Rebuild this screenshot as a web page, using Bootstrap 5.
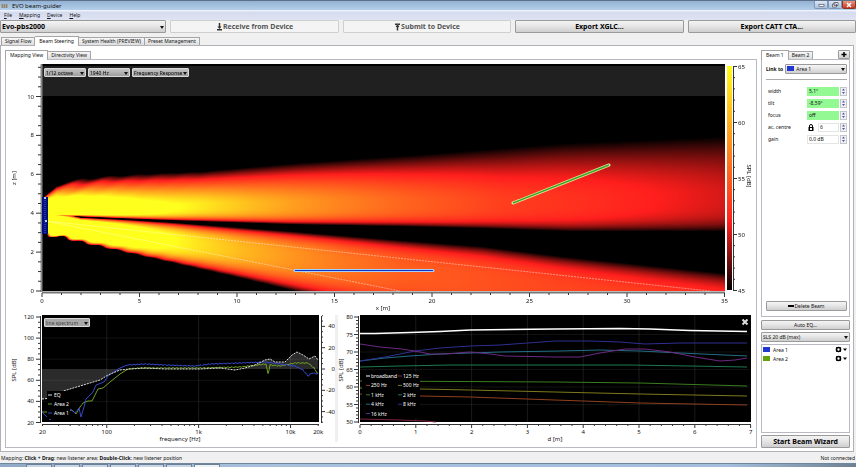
<!DOCTYPE html>
<html lang="en">
  <head>
    <meta charset="utf-8" />
    <title>EVO beam-guider</title>
    <link
      rel="stylesheet"
      href="https://cdn.jsdelivr.net/npm/bootstrap@5.3.3/dist/css/bootstrap.min.css"
    />
    <style>
      body {
        font-family: "Noto Sans", "Open Sans", sans-serif;
        font-size: 5px;
        line-height: 8px;
        color: #111;
        background: #f0f0f0;
      }
      button,
      select,
      input {
        font-size: inherit;
        line-height: inherit;
        color: inherit;
      }
      svg {
        display: block;
      }
      .title-bar {
        height: 10px;
        border-top: 1px solid #5f7188;
        background: linear-gradient(#93b1d3, #b3cfea);
        font-size: 6px;
        padding-left: 1px;
      }
      .win-btn {
        width: 14px;
        height: 8px;
        padding: 0;
        border: 1px solid #7f97b5;
        border-top: 0;
        border-radius: 0 0 2px 2px;
        background: linear-gradient(#dbe7f5, #a9c0dc);
      }
      .win-close {
        border-color: #8a3324;
        background: linear-gradient(#e39a86, #c8371c);
      }
      .menu-bar {
        height: 10px;
        background: linear-gradient(#eef1fb 1px, #d4dbee 2px, #dfe4f3);
        gap: 7px;
        padding-left: 4px;
      }
      .menu-bar a {
        color: #111;
        text-decoration: none;
      }
      .tool-row {
        gap: 4px;
      }
      .tool-row > * {
        flex: 1 1 0;
      }
      .ui-btn,
      .ui-pick select {
        border: 1px solid #9a9a9a;
        border-radius: 1px;
        background: linear-gradient(#f4f4f4, #e6e6e6 45%, #cfcfcf);
        padding: 0;
        text-align: center;
      }
      .ui-btn {
        height: 10px;
      }
      .big-text {
        font-size: 7px;
        font-weight: 700;
        height: 13px;
        color: #000;
      }
      .big-text select {
        font-weight: 700;
      }
      .ui-btn:disabled {
        background: #f4f4f4;
        border-color: #cfcfcf;
        color: #555;
      }
      .add-btn {
        height: 9px;
      }
      .ui-pick {
        position: relative;
        display: block;
      }
      .ui-pick select {
        appearance: none;
        display: block;
        width: 100%;
        height: 100%;
        padding-left: 1px;
        text-align: left;
      }
      .ui-pick::after {
        content: "";
        position: absolute;
        right: 2px;
        top: 50%;
        margin-top: -1px;
        border: 2px solid transparent;
        border-top: 3px solid #111;
        border-bottom: 0;
        pointer-events: none;
      }
      .tab-strip {
        position: relative;
        z-index: 1;
      }
      .main-tabs {
        padding: 3px 0 0 1px;
      }
      .tab-strip button {
        height: 8px;
        line-height: 7px;
        border: 1px solid #a5a5a8;
        border-left-width: 0;
        border-bottom: 0;
        background: linear-gradient(#f6f6f6, #dedede);
        padding: 0 3px;
      }
      .tab-strip button:first-child {
        border-left-width: 1px;
      }
      .tab-strip button.picked {
        height: 10px;
        margin-bottom: -1px;
        background: #fff;
        padding: 0 4px;
      }
      .page-box {
        border: 1px solid #b0b0b6;
        background: #fff;
        margin-right: 2px;
        padding: 4px 3px 3px 4px;
        gap: 4px;
      }
      .pane {
        border: 1px solid #b9b9c2;
        background: #fff;
      }
      .side-col {
        width: 89px;
        flex: none;
      }
      .plot-tools {
        position: absolute;
        gap: 2px;
        top: 8px;
        left: 38px;
      }
      .spectrum-tools {
        top: 5px;
      }
      .plot-tools .ui-pick {
        height: 9px;
      }
      .plot-tools select {
        background: linear-gradient(#c4c4c4, #9d9d9d);
        border-color: #d8d8d8;
        line-height: 6px;
        color: #000;
      }
      .spectrum-tools select {
        background: #a8a8a8;
        color: #444;
      }
      .w-short {
        width: 42px;
      }
      .w-mid {
        width: 46px;
      }
      .w-long {
        width: 57px;
      }
      .lower-a {
        flex: 329 1 0;
      }
      .lower-b {
        flex: 421 1 0;
      }
      svg text {
        font-size: 6px;
        fill: #111;
      }
      svg .key-text text {
        font-size: 5px;
        fill: #fff;
      }
      .tint {
        width: 7px;
        height: 5px;
        flex: none;
      }
      .tint-a {
        background: #2138d0;
      }
      .tint-b {
        background: #62a00c;
      }
      .link-pick {
        height: 10px;
      }
      .link-pick select {
        padding-left: 10px;
      }
      .link-pick .tint {
        position: absolute;
        left: 2px;
        top: 2px;
      }
      .link-row {
        padding: 4px 2px 0 4px;
        gap: 2px;
      }
      .side-rule {
        border-top: 1px solid #aaa;
        margin: 5px 2px 0 4px;
      }
      .props {
        padding: 6px 2px 0 6px;
        gap: 2px;
      }
      .props label {
        flex: 1;
      }
      .prop-row {
        height: 10px;
      }
      .prop-row input {
        width: 32px;
        height: 9px;
        border: 1px solid #e4e4e4;
        padding: 0 1px;
        background: #fff;
      }
      .prop-row input.set {
        background: #93f993;
        border-color: #93f993;
      }
      .prop-row input.thin {
        width: 21px;
      }
      .spin {
        width: 7px;
        height: 9px;
        border: 1px solid #c4c4cc;
        background: #f1f1f6;
        margin-left: 1px;
      }
      .spin button {
        flex: 1;
        border: 0;
        padding: 0;
        background: none;
        min-height: 0;
      }
      .beam-pane {
        flex: 2 1 0;
      }
      .pad-box {
        padding: 0 2px 5px 4px;
      }
      .side-stack {
        flex: 1 1 0;
        gap: 2px;
        padding-top: 3px;
      }
      .side-stack .mode-pick {
        height: 10px;
      }
      .area-list {
        padding: 0 1px;
      }
      .area-list li {
        height: 9px;
        gap: 3px;
      }
      .icon-btn {
        border: 0;
        background: none;
        padding: 0;
      }
      .status-bar {
        height: 11px;
        line-height: 12px;
        padding: 0 1px;
      }
      .task-bar {
        height: 4px;
        background: linear-gradient(90deg, #8fa9c6, #a7c1dd 30%, #a3bfdc 85%, #6f8093);
        border-top: 1px solid #71869c;
        padding-left: 26px;
        gap: 2px;
      }
      .task-bar i {
        width: 26px;
        background: #c6d6e6;
        border: 1px solid #6d8298;
        border-bottom: 0;
      }
      .task-bar i.front {
        background: #edf2f7;
      }
    </style>
  </head>

  <body class="d-flex flex-column min-vh-100">
    <header>
      <div class="title-bar d-flex align-items-center">
        <svg width="7" height="6" viewBox="0 0 7 6">
          <rect y="1" width="7" height="4" fill="#a9a595" />
          <path d="M1 2h1M3 2h1M5 2h1M1 4h1M3 4h1M5 4h1" stroke="#6b6a66" />
        </svg>
        <span class="ms-1">EVO beam-guider</span>
        <div class="ms-auto d-flex align-self-start">
          <button class="win-btn" aria-label="Minimize">
            <svg width="12" height="7" viewBox="0 0 12 7">
              <rect x="4" y="3.5" width="5" height="2" fill="#fff" stroke="#445" stroke-width=".6" />
            </svg>
          </button>
          <button class="win-btn" aria-label="Restore">
            <svg width="12" height="7" viewBox="0 0 12 7">
              <path d="M5 1.5h4v3H5zM3.5 3h4v3h-4z" fill="#fff" stroke="#445" stroke-width=".7" />
            </svg>
          </button>
          <button class="win-btn win-close" aria-label="Close">
            <svg width="12" height="7" viewBox="0 0 12 7">
              <path d="M4 2l4 4M8 2l-4 4" stroke="#fff" stroke-width="1.5" />
            </svg>
          </button>
        </div>
      </div>
      <nav class="menu-bar d-flex align-items-center">
        <a href="#"><u>F</u>ile</a>
        <a href="#"><u>M</u>apping</a>
        <a href="#"><u>D</u>evice</a>
        <a href="#"><u>H</u>elp</a>
      </nav>
      <div class="tool-row d-flex">
        <label class="ui-pick big-text">
          <select aria-label="Device">
            <option>Evo-pbs2000</option>
          </select>
        </label>
        <button class="ui-btn big-text d-flex align-items-center justify-content-center" disabled>
          <svg width="7" height="8" viewBox="0 0 7 8">
            <path d="M3.5 0v5" stroke="#333" stroke-width="1.5" />
            <path d="M1.5 3.5h4l-2 2.5zM1 6h5v1.5H1z" fill="#333" />
          </svg>
          Receive from Device
        </button>
        <button class="ui-btn big-text d-flex align-items-center justify-content-center" disabled>
          <svg width="7" height="8" viewBox="0 0 7 8">
            <path d="M3.5 2v5.5" stroke="#333" stroke-width="1.5" />
            <path d="M1.5 4h4l-2-2.5zM1 .5h5V2H1z" fill="#333" />
          </svg>
          Submit to Device
        </button>
        <button class="ui-btn big-text">Export XGLC...</button>
        <button class="ui-btn big-text">Export CATT CTA...</button>
      </div>
    </header>

    <div class="tab-strip main-tabs d-flex align-items-end">
      <button>Signal Flow</button>
      <button class="picked">Beam Steering</button>
      <button>System Health (PREVIEW)</button>
      <button>Preset Management</button>
    </div>

    <main class="page-box d-flex flex-grow-1">
      <section class="d-flex flex-column flex-grow-1">
        <div class="tab-strip d-flex align-items-end">
          <button class="picked">Mapping View</button>
          <button>Directivity View</button>
        </div>
        <div class="pane flex-grow-1">
          <div class="position-relative">
            <svg id="mapPlot" width="100%" viewBox="0 0 750 253">
              <foreignObject x="36" y="5" width="683" height="226">
                <canvas id="field" class="d-block" width="683" height="226"></canvas>
              </foreignObject>
            </svg>
            <div class="plot-tools d-flex">
              <label class="ui-pick w-short">
                <select aria-label="Bandwidth"><option>1/12 octave</option></select>
              </label>
              <label class="ui-pick w-short">
                <select aria-label="Frequency"><option>1940 Hz</option></select>
              </label>
              <label class="ui-pick w-long">
                <select aria-label="Display"><option>Frequency Response</option></select>
              </label>
            </div>
          </div>
          <div class="d-flex">
            <div class="lower-a position-relative">
              <svg id="freqPlot" width="100%" viewBox="0 0 329 134"></svg>
              <div class="plot-tools spectrum-tools d-flex">
                <label class="ui-pick w-mid">
                  <select aria-label="Spectrum"><option>line spectrum</option></select>
                </label>
              </div>
            </div>
            <div class="lower-b">
              <svg id="distPlot" width="100%" viewBox="0 0 421 134"></svg>
            </div>
          </div>
        </div>
      </section>

      <aside class="side-col d-flex flex-column">
        <div class="d-flex justify-content-between align-items-end">
          <div class="tab-strip d-flex align-items-end">
            <button class="picked">Beam 1</button>
            <button>Beam 2</button>
          </div>
          <button class="ui-btn add-btn" aria-label="Add beam">
            <svg width="10" height="7" viewBox="0 0 10 7">
              <path d="M5 1v5M2.5 3.5h5" stroke="#000" stroke-width="1.5" />
            </svg>
          </button>
        </div>
        <div class="pane beam-pane d-flex flex-column">
          <div class="link-row d-flex align-items-center">
            <label for="linkTo"><b>Link to</b></label>
            <div class="ui-pick link-pick flex-grow-1">
              <select id="linkTo">
                <option>Area 1</option>
              </select>
              <span class="tint tint-a"></span>
            </div>
          </div>
          <div class="side-rule"></div>
          <div class="props d-flex flex-column" id="props"></div>
          <div class="pad-box mt-auto">
            <button class="ui-btn w-100 d-flex align-items-center justify-content-center">
              <svg width="6" height="6" viewBox="0 0 6 6"><rect y="2" width="6" height="2" /></svg>
              Delete Beam
            </button>
          </div>
        </div>
        <div class="side-stack d-flex flex-column">
          <button class="ui-btn">Auto EQ...</button>
          <label class="ui-pick mode-pick">
            <select aria-label="Mode"><option>SLS 20 dB (max)</option></select>
          </label>
          <ul class="pane area-list list-unstyled mb-0 flex-grow-1" id="areas"></ul>
          <button class="ui-btn big-text">Start Beam Wizard</button>
        </div>
      </aside>
    </main>

    <footer>
      <div class="status-bar d-flex justify-content-between">
        <span>
          Mapping: <b>Click + Drag</b>: new listener area; <b>Double-Click</b>: new listener
          position
        </span>
        <span>Not connected</span>
      </div>
      <div class="task-bar d-flex">
        <i></i><i></i><i></i><i></i><i></i><i></i><i class="front"></i>
      </div>
    </footer>

    <script src="https://cdn.jsdelivr.net/npm/bootstrap@5.3.3/dist/js/bootstrap.bundle.min.js"></script>
    <script>
      const NS = "http://www.w3.org/2000/svg";

      function add(parent, tag, attrs, text) {
        const node = document.createElementNS(NS, tag);
        for (const key in attrs) {
          node.setAttribute(key, attrs[key]);
        }
        if (text !== undefined) {
          node.textContent = text;
        }
        parent.appendChild(node);
        return node;
      }

      function line(parent, x1, y1, x2, y2, color, width) {
        return add(parent, "line", { x1, y1, x2, y2, stroke: color, "stroke-width": width || 1 });
      }

      function label(parent, x, y, text, anchor, turn) {
        const attrs = { x, y, "text-anchor": anchor || "middle" };
        if (turn) {
          attrs.transform = `rotate(${turn} ${x} ${y})`;
        }
        return add(parent, "text", attrs, text);
      }

      function curve(parent, points, color, width, dash) {
        return add(parent, "polyline", {
          points: points.map((p) => p.join(",")).join(" "),
          fill: "none",
          stroke: color,
          "stroke-width": width || 1,
          "stroke-dasharray": dash || "none",
        });
      }

      // piecewise linear lookup in [[x, v], ...]
      function at(keys, x) {
        if (x <= keys[0][0]) return keys[0][1];
        for (let i = 1; i < keys.length; i++) {
          if (x <= keys[i][0]) {
            const a = keys[i - 1];
            const b = keys[i];
            return a[1] + ((b[1] - a[1]) * (x - a[0])) / (b[0] - a[0]);
          }
        }
        return keys[keys.length - 1][1];
      }

      // sound field, in canvas pixels
      const upper = {
        top: [[0, 132], [6, 126], [14, 119], [30, 115], [60, 111], [110, 108], [160, 106], [250, 98], [380, 89], [520, 78], [683, 71]],
        mid: [[0, 142], [60, 142], [110, 141], [160, 138], [300, 136], [460, 135], [683, 129]],
        bottom: [[0, 151], [35, 151], [80, 153], [130, 155], [250, 159], [360, 161], [440, 163], [530, 166], [683, 166]],
        peak: [[0, 1.8], [60, 1.4], [100, 1.15], [130, 1.02], [170, 0.9], [210, 0.79], [250, 0.7], [300, 0.61], [360, 0.52], [460, 0.4], [560, 0.34], [683, 0.25]],
        above: [[0, 1.1], [110, 1.3], [300, 1.6], [683, 1.8]],
        below: [[0, 4], [683, 4]],
      };
      const lower = {
        top: [[0, 146], [25, 149], [38, 152], [80, 154], [130, 157], [250, 166], [360, 175], [440, 181], [520, 191], [683, 208]],
        mid: [[0, 158], [80, 168], [160, 179], [250, 191], [360, 204], [520, 226], [683, 248]],
        bottom: [[0, 169], [20, 172], [40, 177], [80, 186], [120, 195], [160, 204], [200, 213], [250, 225], [360, 252], [520, 290], [683, 330]],
        peak: [[0, 1.8], [60, 1.4], [90, 1.2], [120, 1.04], [160, 0.9], [200, 0.78], [250, 0.67], [300, 0.58], [360, 0.5], [520, 0.42], [683, 0.38]],
        above: [[0, 4], [160, 3], [683, 3]],
        below: [[0, 5], [80, 4], [160, 3], [683, 2.4]],
      };

      function level(beam, x, y) {
        const mid = at(beam.mid, x);
        const above = y < mid;
        let edge = at(above ? beam.top : beam.bottom, x);
        // side lobes feather the outer edge close to the source
        if ((beam === upper) === above) {
          edge += Math.sin((x + y * 1.6) / 4) * 2 * Math.exp(-x / 60);
        }
        const r = (y - mid) / (edge - mid);
        if (r >= 1) return 0;
        return at(beam.peak, x) * (1 - Math.pow(Math.max(r, 0), at(above ? beam.above : beam.below, x)));
      }

      function heat(v) {
        if (v < 0.3) {
          const k = v / 0.3;
          return [255 * k, 30 * k, 28 * k];
        }
        const k = Math.min((v - 0.3) / 0.7, 1);
        return [255, 30 + 225 * k, 30];
      }

      function drawField() {
        const canvas = document.querySelector("#field");
        const ctx = canvas.getContext("2d");
        const img = ctx.createImageData(canvas.width, canvas.height);
        for (let y = 0; y < canvas.height; y++) {
          for (let x = 0; x < canvas.width; x++) {
            const v = Math.max(level(upper, x, y), level(lower, x, y));
            const rgb = y < 31 ? [32, 32, 32] : heat(v);
            const i = (y * canvas.width + x) * 4;
            img.data[i] = rgb[0];
            img.data[i + 1] = rgb[1];
            img.data[i + 2] = rgb[2];
            img.data[i + 3] = 255;
          }
        }
        ctx.putImageData(img, 0, 0);
      }

      function drawMap() {
        const svg = document.querySelector("#mapPlot");
        const sx = (m) => 36 + m * 19.5;
        const sy = (m) => 231 - m * 19.45;

        add(svg, "rect", { x: 36, y: 4, width: 683, height: 2, fill: "#000" });
        line(svg, 35.5, 4, 35.5, 232, "#888", 2);
        for (let z = 0; z <= 11.5; z += 0.5) {
          line(svg, z % 2 ? 32 : 30, sy(z), 35, sy(z), "#333");
          if (z % 2 === 0) {
            label(svg, 28, sy(z) + 2, z, "end");
          }
        }
        line(svg, 36, 232.5, 719, 232.5, "#777", 2);
        for (let x = 0; x <= 35; x++) {
          line(svg, sx(x), 233, sx(x), x % 5 ? 235 : 237, "#333");
          if (x % 5 === 0) {
            label(svg, sx(x), 243, x);
          }
        }
        label(svg, 10, 118, "z [m]", "middle", -90);
        label(svg, 377, 250, "x [m]");

        // beam axes
        line(svg, 40, 161, 704, 231, "rgba(255,255,255,.45)").setAttribute("stroke-dasharray", "2 1");
        line(svg, 40, 161, 394, 231, "rgba(255,255,255,.45)").setAttribute("stroke-dasharray", "2 1");

        // loudspeaker column
        add(svg, "rect", { x: 36, y: 137, width: 6, height: 37, fill: "#001080" });
        line(svg, 39, 138, 39, 173, "#5561b8", 1).setAttribute("stroke-dasharray", "1 1");
        add(svg, "circle", { cx: 39, cy: 138, r: 1, fill: "#fff" });
        add(svg, "circle", { cx: 40, cy: 161, r: 1, fill: "#fff" });

        // listener areas
        line(svg, 289, 210.5, 427, 210.5, "#9fd0ff", 3).setAttribute("stroke-linecap", "round");
        line(svg, 289, 210.5, 427, 210.5, "#1530c0", 1);
        line(svg, 507, 143, 603, 105, "#e0e0a8", 3).setAttribute("stroke-linecap", "round");
        line(svg, 507, 143, 603, 105, "#3ca818", 1.5);

        // level scale
        const defs = add(svg, "defs", {});
        const grad = add(defs, "linearGradient", { id: "scaleFill", x1: 0, y1: 1, x2: 0, y2: 0 });
        for (const v of [0, 0.3, 0.5, 0.75, 1]) {
          add(grad, "stop", { offset: v, "stop-color": `rgb(${heat(v).map(Math.round)})` });
        }
        add(svg, "rect", { x: 721, y: 6, width: 5, height: 224, fill: "url(#scaleFill)" });
        line(svg, 727.5, 6, 727.5, 230, "#333");
        for (let db = 45; db <= 65; db++) {
          const y = 230.5 - (db - 45) * 11.2;
          line(svg, 727, y, db % 5 ? 729 : 731, y, "#333");
          if (db % 5 === 0) {
            label(svg, 732, y + 2, db, "start");
          }
        }
        label(svg, 741, 116, "SPL [dB]", "middle", 90);
      }

      function drawFreq() {
        const svg = document.querySelector("#freqPlot");
        const sx = (hz) => 36.5 + Math.log10(hz / 20) * 91.9;
        const sy = (db) => 109.5 - (db - 20) * 1.055;
        add(svg, "rect", { x: 36, y: 2, width: 277, height: 107, fill: "#000" });

        const eq = [[36, 86], [46, 85], [54, 79], [74, 73], [94, 67], [102, 62], [114, 57], [124, 56], [139, 55], [159, 56], [194, 56], [214, 55], [229, 57], [239, 55], [249, 52], [259, 47], [264, 46], [269, 49], [279, 49], [286, 42], [291, 39], [297, 42], [303, 46], [309, 43], [312, 47]];
        add(svg, "polygon", { points: `36,56 ${eq.join(" ")} 312,56`, fill: "#2b2b2b" });

        for (const hz of [100, 1000, 10000]) {
          line(svg, sx(hz), 2, sx(hz), 109, "rgba(255,255,255,.1)");
        }
        for (let db = 40; db <= 100; db += 20) {
          line(svg, 36, sy(db), 313, sy(db), "rgba(255,255,255,.07)");
        }

        const rough = (keys, from) => {
          const out = [];
          for (let x = 36; x <= 312; x++) {
            const wobble = x > from ? Math.sin(x * 2.3) * Math.sin(x * 0.7) * 0.8 : 0;
            out.push([x, at(keys, x) + wobble]);
          }
          return out;
        };
        const area1 = [[36, 99], [41, 104], [44, 107], [47, 101], [54, 99], [64, 96], [69, 100], [73, 95], [75, 104], [78, 94], [80, 86], [84, 82], [87, 79], [90, 72], [98, 69], [102, 63], [112, 56], [121, 52], [139, 51], [159, 52], [189, 53], [204, 51], [234, 50], [259, 49], [274, 51], [289, 53], [297, 57], [302, 63], [306, 60], [312, 61]];
        const area2 = [[36, 99], [54, 99], [66, 97], [70, 101], [74, 94], [77, 90], [82, 88], [86, 88], [89, 82], [92, 76], [97, 75], [104, 69], [114, 61], [122, 56], [134, 55], [159, 55], [194, 55], [234, 54], [260, 51], [262, 61], [264, 52], [274, 53], [289, 50], [302, 50], [308, 55], [312, 61]];
        curve(svg, rough(area2, 120), "#6fa022");
        curve(svg, rough(area1, 120), "#3548cc");
        curve(svg, eq, "#ddd", 1, "2 1");

        const key = add(svg, "g", { class: "key-text" });
        add(key, "rect", { x: 41, y: 78, width: 23, height: 28, fill: "#000" });
        [["EQ", "#ddd"], ["Area 2", "#6fa022"], ["Area 1", "#3548cc"]].forEach((item, i) => {
          line(key, 42, 82 + i * 9, 46, 82 + i * 9, item[1]);
          label(key, 48, 84 + i * 9, item[0], "start");
        });

        line(svg, 34.5, 3, 34.5, 110, "#333");
        for (let db = 20; db <= 120; db += 5) {
          line(svg, db % 20 ? 32 : 30, sy(db), 34, sy(db), "#333");
          if (db % 20 === 0) {
            label(svg, 28, sy(db) + 2, db, "end");
          }
        }
        line(svg, 315.5, 3, 315.5, 110, "#333");
        for (let db = -50; db <= 50; db += 5) {
          const y = 56 - db * 1.065;
          line(svg, 316, y, db % 20 ? 317 : 319, y, "#333");
          if (db % 20 === 0) {
            label(svg, 329, y + 2, db, "end");
          }
        }
        line(svg, 36, 111.5, 313, 111.5, "#333");
        for (let step = 10; step <= 10000; step *= 10) {
          for (let n = 1; n < 10; n++) {
            const hz = step * n;
            if (hz >= 20 && hz <= 20000) {
              line(svg, sx(hz), 112, sx(hz), n === 1 ? 115 : 113, "#333");
            }
          }
        }
        [[20, "20"], [100, "100"], [1000, "1k"], [10000, "10k"], [20000, "20k"]].forEach((t) => {
          label(svg, sx(t[0]), 121, t[1]);
        });
        label(svg, 10, 57, "SPL [dB]", "middle", -90);
        label(svg, 174, 128, "frequency [Hz]");
      }

      function drawDist() {
        const svg = document.querySelector("#distPlot");
        const sx = (m) => 25 + m * 55.8;
        const sy = (db) => 109 - (db - 50) * 3.5;
        add(svg, "rect", { x: 0, y: 2, width: 3, height: 127, fill: "#f0f0f0" });
        add(svg, "rect", { x: 25, y: 2, width: 391, height: 107, fill: "#000" });
        for (let m = 1; m < 7; m++) {
          line(svg, sx(m), 2, sx(m), 109, "rgba(255,255,255,.1)");
        }
        for (let db = 55; db < 80; db += 5) {
          line(svg, 25, sy(db), 414, sy(db), "rgba(255,255,255,.07)");
        }

        const colors = {
          broadband: "#fff", "125 Hz": "#7c2446", "250 Hz": "#92401f", "500 Hz": "#7d7a1c", "1 kHz": "#3a7d1e",
          "2 kHz": "#1c7a50", "4 kHz": "#226f86", "8 kHz": "#2f2f92", "16 kHz": "#6c2a84",
        };
        const curves = {
          "125 Hz": [[25, 106], [65, 107], [90, 108], [101, 109]],
          "250 Hz": [[25, 81], [85, 83], [135, 84], [220, 87], [305, 90], [412, 92]],
          "500 Hz": [[25, 75], [85, 76], [135, 77], [220, 79], [305, 81], [412, 83]],
          "1 kHz": [[25, 68], [220, 69], [305, 70], [412, 73]],
          "2 kHz": [[25, 54], [65, 53], [115, 52], [215, 52], [295, 52], [355, 53], [412, 54]],
          "4 kHz": [[25, 48], [50, 45], [75, 43], [105, 41], [165, 39], [225, 38], [265, 37], [305, 38], [345, 40], [412, 43]],
          "8 kHz": [[25, 48], [50, 44], [80, 38], [105, 35], [135, 33], [165, 32], [220, 28], [255, 28], [285, 29], [310, 31], [345, 30], [412, 30]],
          "16 kHz": [[25, 31], [45, 34], [67, 36], [85, 39], [95, 41], [110, 41], [135, 39], [155, 41], [170, 43], [220, 44], [245, 44], [265, 40], [290, 36], [310, 36], [335, 39], [360, 44], [385, 48], [400, 47], [412, 45]],
        };
        for (const name in curves) {
          curve(svg, curves[name], colors[name]);
        }

        const key = add(svg, "g", { class: "key-text" });
        add(key, "rect", { x: 27, y: 59, width: 58, height: 46, fill: "#000" });
        Object.keys(colors).forEach((name, i) => {
          const x = i % 2 ? 63 : 31;
          const y = 63 + Math.floor(i / 2) * 9.4;
          line(key, x, y, x + 4, y, colors[name]);
          label(key, x + 5, y + 2, name, "start");
        });
        curve(
          svg,
          [[25, 20.5], [40, 20.5], [75, 19.5], [105, 18.5], [135, 17], [220, 16], [285, 15.5], [315, 16], [355, 17.5], [412, 18.5]],
          "#fff",
          1.5
        );
        add(svg, "path", { d: "M407.5 6.5l5 5M412.5 6.5l-5 5", stroke: "#ddd", "stroke-width": 2 });

        line(svg, 23.5, 3, 23.5, 110, "#333");
        for (let db = 50; db <= 80; db++) {
          line(svg, db % 5 ? 21 : 19, sy(db), 23, sy(db), "#333");
          if (db % 5 === 0) {
            label(svg, 18, sy(db) + 2, db, "end");
          }
        }
        line(svg, 25, 111.5, 416, 111.5, "#333");
        for (let i = 0; i <= 35; i++) {
          line(svg, sx(i / 5), 112, sx(i / 5), i % 5 ? 113 : 115, "#333");
          if (i % 5 === 0) {
            label(svg, sx(i / 5), 121, i / 5);
          }
        }
        label(svg, 8, 57, "SPL [dB]", "middle", -90);
        label(svg, 220, 128, "d [m]");
      }

      const props = [
        { name: "width", value: "5,1°", cls: "set" },
        { name: "tilt", value: "-8,59°", cls: "set" },
        { name: "focus", value: "off", cls: "set" },
        { name: "ac. centre", value: "6", cls: "thin", lock: true },
        { name: "gain", value: "0,0 dB", cls: "" },
      ];

      const lockIcon = `<svg class="me-1" width="6" height="7" viewBox="0 0 6 7">
        <path d="M1.5 3V2a1.5 1.5 0 0 1 3 0v1" fill="none" stroke="#000" />
        <path d="M.5 3h5v4h-5zM2 4v2h2V4z" fill="#000" fill-rule="evenodd" /></svg>`;

      document.querySelector("#props").innerHTML = props
        .map(
          (p, i) => `<div class="prop-row d-flex align-items-center">
            <label for="prop${i}">${p.name}</label>
            ${p.lock ? lockIcon : ""}
            <input type="text" id="prop${i}" class="${p.cls}" value="${p.value}" />
            <div class="spin d-flex flex-column">
              <button aria-label="Increase ${p.name}"><svg width="5" height="3" viewBox="0 0 5 3"><path d="M1 2.5l1.5-2 1.5 2z" fill="#4a58a0" /></svg></button>
              <button aria-label="Decrease ${p.name}"><svg width="5" height="3" viewBox="0 0 5 3"><path d="M1 1l1.5 2L4 1z" fill="#4a58a0" /></svg></button>
            </div>
          </div>`
        )
        .join("");

      document.querySelector("#areas").innerHTML = ["Area 1", "Area 2"]
        .map(
          (name, i) => `<li class="d-flex align-items-center">
            <span class="tint ${i ? "tint-b" : "tint-a"}"></span>
            <span class="flex-grow-1">${name}</span>
            <button class="icon-btn" aria-label="${name} settings">
              <svg width="13" height="7" viewBox="0 0 13 7">
                <circle cx="3.5" cy="3.5" r="2" fill="none" stroke="#000" stroke-width="1.6" />
                <path d="M1.3 1.3l.8.8M5 5l.8.8M5.8 1.300l-.8.8M1.300 5.800l.8-.8" stroke="#000" />
                <path d="M8 2.5h4l-2 2.5z" />
              </svg>
            </button>
          </li>`
        )
        .join("");

      drawField();
      drawMap();
      drawFreq();
      drawDist();
    </script>
  </body>
</html>
